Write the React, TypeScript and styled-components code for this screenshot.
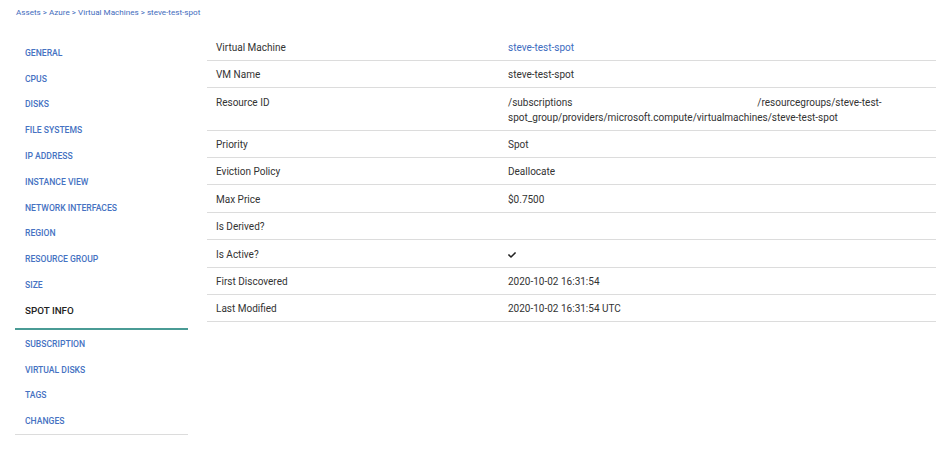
import React from "react";
import styled, { createGlobalStyle } from "styled-components";
import { FaCheck } from "react-icons/fa";

const Global = createGlobalStyle`
  html, body { margin: 0; padding: 0; background: #fff; }
  body { font-family: Roboto, "Liberation Sans", Arial, sans-serif; color: #333; }
`;

const Page = styled.div`
  padding: 7px 0 0 15px;
`;

const Breadcrumb = styled.div`
  font-size: 8.1px;
  line-height: 10px;
  color: #3f6cbd;
  padding-left: 1px;
  margin-bottom: 16.5px;
`;

const Main = styled.div`
  display: flex;
  align-items: flex-start;
  gap: 19px;
`;

const Sidebar = styled.nav`
  width: 173px;
  flex: none;
  margin-top: 6.5px;
  border-bottom: 1px solid #dcdcdc;
`;

const NavItem = styled.div<{ $active?: boolean }>`
  height: ${(p) => (p.$active ? "32px" : "25.8px")};
  padding-left: 10px;
  display: flex;
  align-items: ${(p) => (p.$active ? "flex-start" : "center")};
  padding-top: ${(p) => (p.$active ? "7px" : "0")};
  box-sizing: border-box;
  font-size: ${(p) => (p.$active ? "9.8px" : "8.6px")};
  font-weight: 500;
  text-transform: uppercase;
  color: ${(p) => (p.$active ? "#222" : "#4672c2")};
  border-bottom: ${(p) => (p.$active ? "2px solid #4a9b95" : "none")};
  margin-bottom: ${(p) => (p.$active ? "1px" : "0")};
`;

const Table = styled.div`
  flex: 1;
  display: grid;
  grid-template-columns: 292px 1fr;
`;

const Cell = styled.div<{ $value?: boolean }>`
  padding: 6.4px 9px 5px;
  font-size: 10px;
  line-height: 15px;
  color: #333;
  border-bottom: 1px solid #dcdcdc;
  ${(p) => (p.$value ? "padding-right: 40px;" : "")}
`;

const Link = styled.span`
  color: #3d6cc0;
`;

const IdLine = styled.div`
  display: flex;
  gap: 185px;
  white-space: nowrap;
`;

const navItems = [
  "General",
  "CPUs",
  "Disks",
  "File Systems",
  "IP Address",
  "Instance View",
  "Network Interfaces",
  "Region",
  "Resource Group",
  "Size",
  "Spot Info",
  "Subscription",
  "Virtual Disks",
  "Tags",
  "Changes",
];

const rows: { label: string; value: React.ReactNode }[] = [
  { label: "Virtual Machine", value: <Link>steve-test-spot</Link> },
  { label: "VM Name", value: "steve-test-spot" },
  {
    label: "Resource ID",
    value: (
      <>
        <IdLine>
          <span>/subscriptions</span>
          <span>/resourcegroups/steve-test-</span>
        </IdLine>
        <IdLine>spot_group/providers/microsoft.compute/virtualmachines/steve-test-spot</IdLine>
      </>
    ),
  },
  { label: "Priority", value: "Spot" },
  { label: "Eviction Policy", value: "Deallocate" },
  { label: "Max Price", value: "$0.7500" },
  { label: "Is Derived?", value: "" },
  { label: "Is Active?", value: <FaCheck size={8} color="#222" style={{ verticalAlign: "-1px" }} /> },
  { label: "First Discovered", value: "2020-10-02 16:31:54" },
  { label: "Last Modified", value: "2020-10-02 16:31:54 UTC" },
];

export default function App() {
  return (
    <Page>
      <Global />
      <Breadcrumb>Assets &gt; Azure &gt; Virtual Machines &gt; steve-test-spot</Breadcrumb>
      <Main>
        <Sidebar>
          {navItems.map((n) => (
            <NavItem key={n} $active={n === "Spot Info"}>
              {n}
            </NavItem>
          ))}
        </Sidebar>
        <Table>
          {rows.map((r) => (
            <React.Fragment key={r.label}>
              <Cell>{r.label}</Cell>
              <Cell $value>{r.value}</Cell>
            </React.Fragment>
          ))}
        </Table>
      </Main>
    </Page>
  );
}
